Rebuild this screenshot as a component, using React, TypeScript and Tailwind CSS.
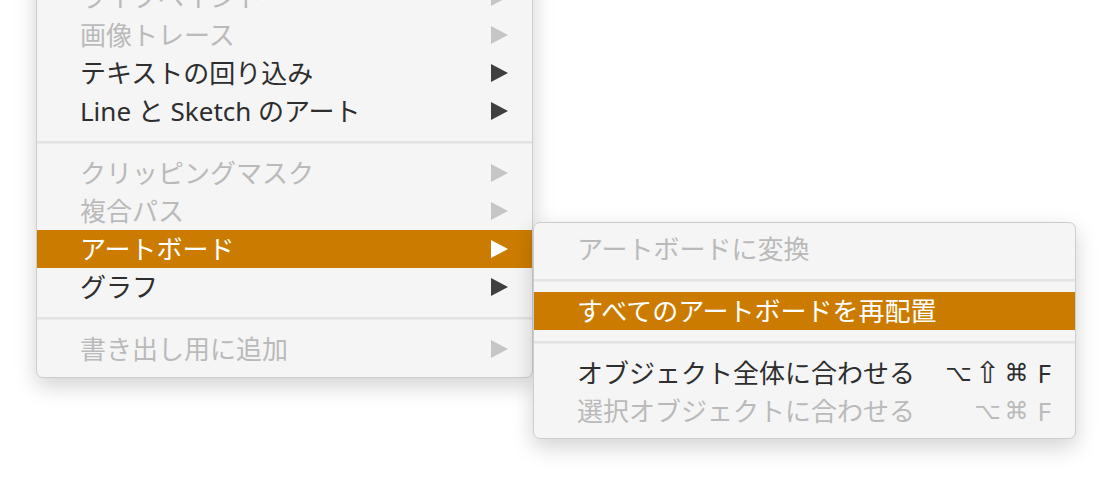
import React from 'react';

type Item =
  | { kind: 'item'; label: string; disabled?: boolean; active?: boolean; submenu?: boolean; keys?: string[] }
  | { kind: 'sep' };

const mainItems: Item[] = [
  { kind: 'item', label: 'ライブペイント', disabled: true, submenu: true },
  { kind: 'item', label: '画像トレース', disabled: true, submenu: true },
  { kind: 'item', label: 'テキストの回り込み', submenu: true },
  { kind: 'item', label: 'Line と Sketch のアート', submenu: true },
  { kind: 'sep' },
  { kind: 'item', label: 'クリッピングマスク', disabled: true, submenu: true },
  { kind: 'item', label: '複合パス', disabled: true, submenu: true },
  { kind: 'item', label: 'アートボード', active: true, submenu: true },
  { kind: 'item', label: 'グラフ', submenu: true },
  { kind: 'sep' },
  { kind: 'item', label: '書き出し用に追加', disabled: true, submenu: true },
];

const subItems: Item[] = [
  { kind: 'item', label: 'アートボードに変換', disabled: true },
  { kind: 'sep' },
  { kind: 'item', label: 'すべてのアートボードを再配置', active: true },
  { kind: 'sep' },
  { kind: 'item', label: 'オブジェクト全体に合わせる', keys: ['⌥', '⇧', '⌘', 'F'] },
  { kind: 'item', label: '選択オブジェクトに合わせる', disabled: true, keys: ['⌥', '⌘', 'F'] },
];

// submenu arrow: solid triangle
const Arrow: React.FC<{ className: string }> = ({ className }) => (
  <svg width="17" height="18" viewBox="0 0 17 18" className={className}>
    <path d="M0 0 L17 9 L0 18 Z" fill="currentColor" />
  </svg>
);

const keyClass: Record<string, string> = {
  '⌥': 'w-[29px] text-center text-[23px]',
  '⇧': 'w-[29px] text-center text-[30px]',
  '⌘': 'w-[29px] text-center text-[24px]',
  F: 'w-[20px] text-right text-[26px]',
};

const MenuRow: React.FC<{ item: Item }> = ({ item }) => {
  if (item.kind === 'sep') {
    return (
      <div className="h-[24px] flex items-center">
        <div className="w-full h-[3px] bg-[#e3e3e3] border-b border-[#ececec]" />
      </div>
    );
  }
  const text = item.active ? 'text-white' : item.disabled ? 'text-[#bababa]' : 'text-[#2e2e2e]';
  const arrow = item.active ? 'text-white' : item.disabled ? 'text-[#c6c6c6]' : 'text-[#3f3f3f]';
  return (
    <div className={`h-[38px] flex items-center pl-[43px] pr-[24px] ${item.active ? 'bg-[#cb7c00]' : ''}`}>
      <span className={`flex-1 text-[26px] leading-none whitespace-nowrap ${text}`}>{item.label}</span>
      {item.submenu && <Arrow className={arrow} />}
      {item.keys && (
        <span className={`flex items-center leading-none ${text}`}>
          {item.keys.map((k, i) => (
            <span
              key={i}
              className={keyClass[k]}
              style={{ fontFamily: k === 'F' ? '"Noto Sans", sans-serif' : '"DejaVu Sans", sans-serif' }}
            >
              {k}
            </span>
          ))}
        </span>
      )}
    </div>
  );
};

const App: React.FC = () => {
  return (
    <div
      className="w-[1112px] h-[484px] overflow-hidden bg-white flex items-start"
      style={{ fontFamily: '"Noto Sans", "Noto Sans CJK JP", sans-serif' }}
    >
      <div className="ml-[36px] mt-[-31px] w-[497px] pt-[8px] pb-[9px] bg-[#f5f5f5] rounded-[7px] border border-[#cdcdcd] shadow-[0_8px_22px_rgba(0,0,0,0.18)]">
        {mainItems.map((it, i) => (
          <MenuRow key={i} item={it} />
        ))}
      </div>
      <div className="mt-[222px] w-[543px] pt-[7px] pb-[8px] bg-[#f5f5f5] rounded-[7px] border border-[#cdcdcd] shadow-[0_8px_22px_rgba(0,0,0,0.18)]">
        {subItems.map((it, i) => (
          <MenuRow key={i} item={it} />
        ))}
      </div>
    </div>
  );
};

export default App;
